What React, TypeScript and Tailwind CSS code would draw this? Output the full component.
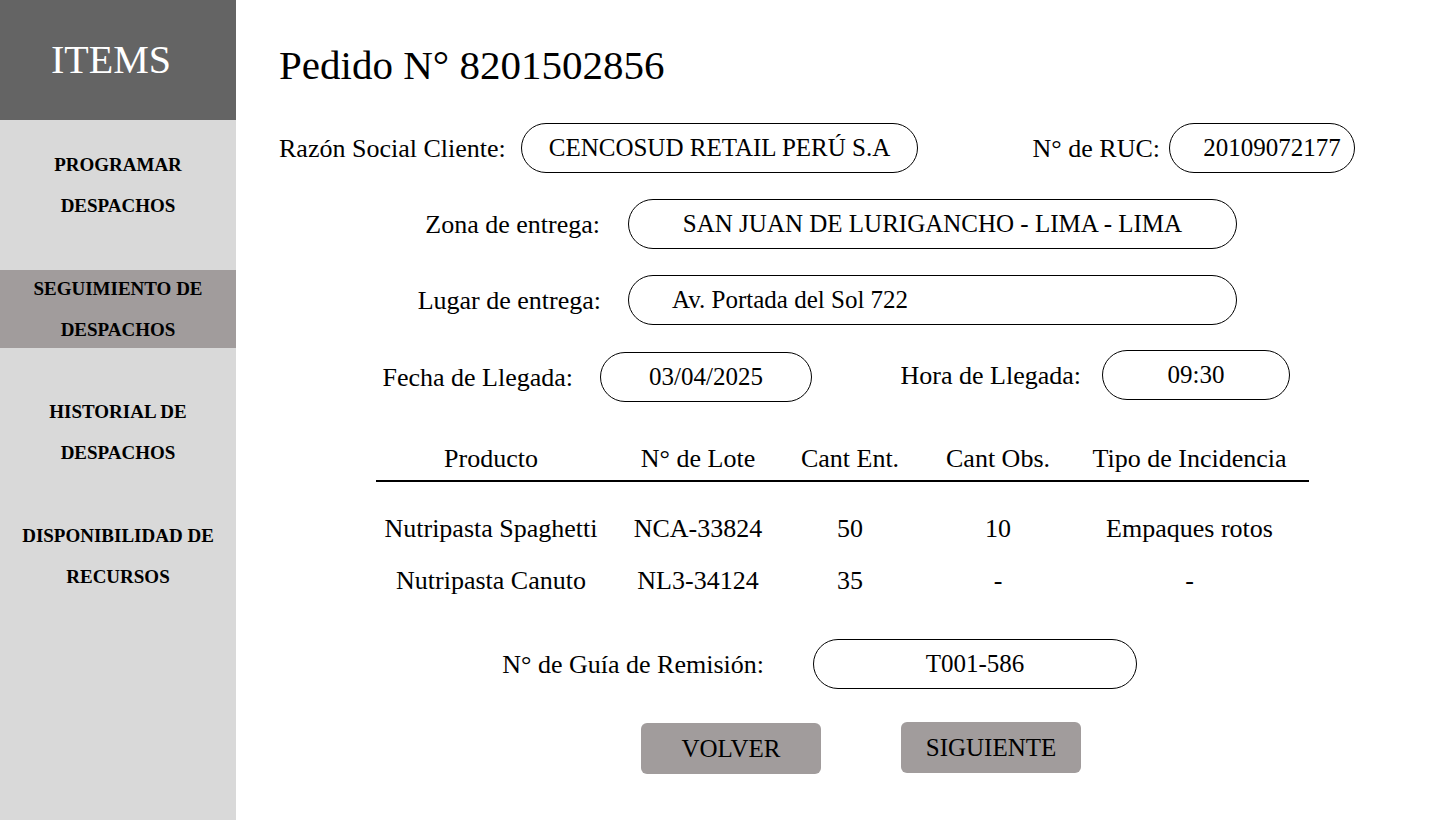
const serif = { fontFamily: '"Liberation Serif", "Times New Roman", serif' };

const navItems = [
  { lines: ["PROGRAMAR", "DESPACHOS"], active: false, mt: "mt-[24px]" },
  { lines: ["SEGUIMIENTO DE", "DESPACHOS"], active: true, mt: "mt-[44px]" },
  { lines: ["HISTORIAL DE", "DESPACHOS"], active: false, mt: "mt-[43px]" },
  { lines: ["DISPONIBILIDAD DE", "RECURSOS"], active: false, mt: "mt-[42px]" },
];

const rows = [
  { producto: "Nutripasta Spaghetti", lote: "NCA-33824", ent: "50", obs: "10", tipo: "Empaques rotos" },
  { producto: "Nutripasta Canuto", lote: "NL3-34124", ent: "35", obs: "-", tipo: "-" },
];

const pill =
  "flex h-[50px] items-center rounded-full border border-black text-[25px] text-black";

function Sidebar() {
  return (
    <aside className="flex w-[236px] shrink-0 flex-col bg-[#d9d9d9]">
      <div className="flex h-[120px] items-center justify-center bg-[#646464] pr-[14px] text-[40px] text-white">
        ITEMS
      </div>
      {navItems.map((item) => (
        <div
          key={item.lines[0]}
          className={`${item.mt} flex items-center justify-center text-center text-[19px] font-bold leading-[41px] text-black ${
            item.active ? "h-[78px] bg-[#a19c9c]" : "h-[82px]"
          }`}
        >
          <div>
            {item.lines.map((l) => (
              <div key={l}>{l}</div>
            ))}
          </div>
        </div>
      ))}
    </aside>
  );
}

export default function App() {
  return (
    <div className="flex h-[820px] w-[1440px] overflow-hidden bg-white text-black" style={serif}>
      <Sidebar />

      <main className="flex flex-1 flex-col text-[26px]">
        <div className="ml-[43px] mt-[41px] flex h-[50px] items-center text-[41px]">
          Pedido N° 8201502856
        </div>

        <div className="mt-[32px] flex h-[50px] items-center">
          <div className="ml-[43px] w-[242px]">Razón Social Cliente:</div>
          <div className={`${pill} w-[397px] justify-center`}>CENCOSUD RETAIL PERÚ S.A</div>
          <div className="ml-[102px] w-[140px] whitespace-nowrap text-right">N° de RUC:</div>
          <div className={`${pill} ml-[9px] w-[186px] justify-center pl-5`}>20109072177</div>
        </div>

        <div className="mt-[26px] flex h-[50px] items-center">
          <div className="ml-[43px] w-[321px] text-right">Zona de entrega:</div>
          <div className={`${pill} ml-[28px] w-[609px] justify-center`}>
            SAN JUAN DE LURIGANCHO - LIMA - LIMA
          </div>
        </div>

        <div className="mt-[26px] flex h-[50px] items-center">
          <div className="ml-[43px] w-[322px] text-right">Lugar de entrega:</div>
          <div className={`${pill} ml-[27px] w-[609px] pl-[43px]`}>Av. Portada del Sol 722</div>
        </div>

        <div className="mt-[25px] flex h-[52px] items-start">
          <div className="ml-[43px] mt-[2px] flex h-[50px] w-[294px] items-center justify-end">
            Fecha de Llegada:
          </div>
          <div className={`${pill} ml-[27px] mt-[2px] w-[212px] justify-center`}>03/04/2025</div>
          <div className="ml-[82px] flex h-[50px] w-[187px] items-center justify-end">
            Hora de Llegada:
          </div>
          <div className={`${pill} ml-[21px] w-[188px] justify-center`}>09:30</div>
        </div>

        <div className="ml-[140px] mt-[34px] w-[933px]">
          <div className="grid h-[46px] grid-cols-[230px_184px_120px_176px_223px] items-center border-b-2 border-black text-center">
            <div>Producto</div>
            <div>N° de Lote</div>
            <div>Cant Ent.</div>
            <div>Cant Obs.</div>
            <div className="pr-4">Tipo de Incidencia</div>
          </div>
          <div className="mt-[26px] flex flex-col gap-[12px]">
            {rows.map((r) => (
              <div
                key={r.lote}
                className="grid h-[40px] grid-cols-[230px_184px_120px_176px_223px] items-center text-center"
              >
                <div>{r.producto}</div>
                <div>{r.lote}</div>
                <div>{r.ent}</div>
                <div>{r.obs}</div>
                <div className="pr-4">{r.tipo}</div>
              </div>
            ))}
          </div>
        </div>

        <div className="mt-[39px] flex h-[50px] items-center">
          <div className="ml-[43px] w-[485px] text-right">N° de Guía de Remisión:</div>
          <div className={`${pill} ml-[49px] w-[324px] justify-center`}>T001-586</div>
        </div>

        <div className="mt-[33px] flex items-start">
          <button className="ml-[405px] mt-px flex h-[51px] w-[180px] items-center justify-center rounded-md bg-[#a19c9c] text-[25px]">
            VOLVER
          </button>
          <button className="ml-[80px] flex h-[51px] w-[180px] items-center justify-center rounded-md bg-[#a19c9c] text-[25px]">
            SIGUIENTE
          </button>
        </div>
      </main>
    </div>
  );
}
